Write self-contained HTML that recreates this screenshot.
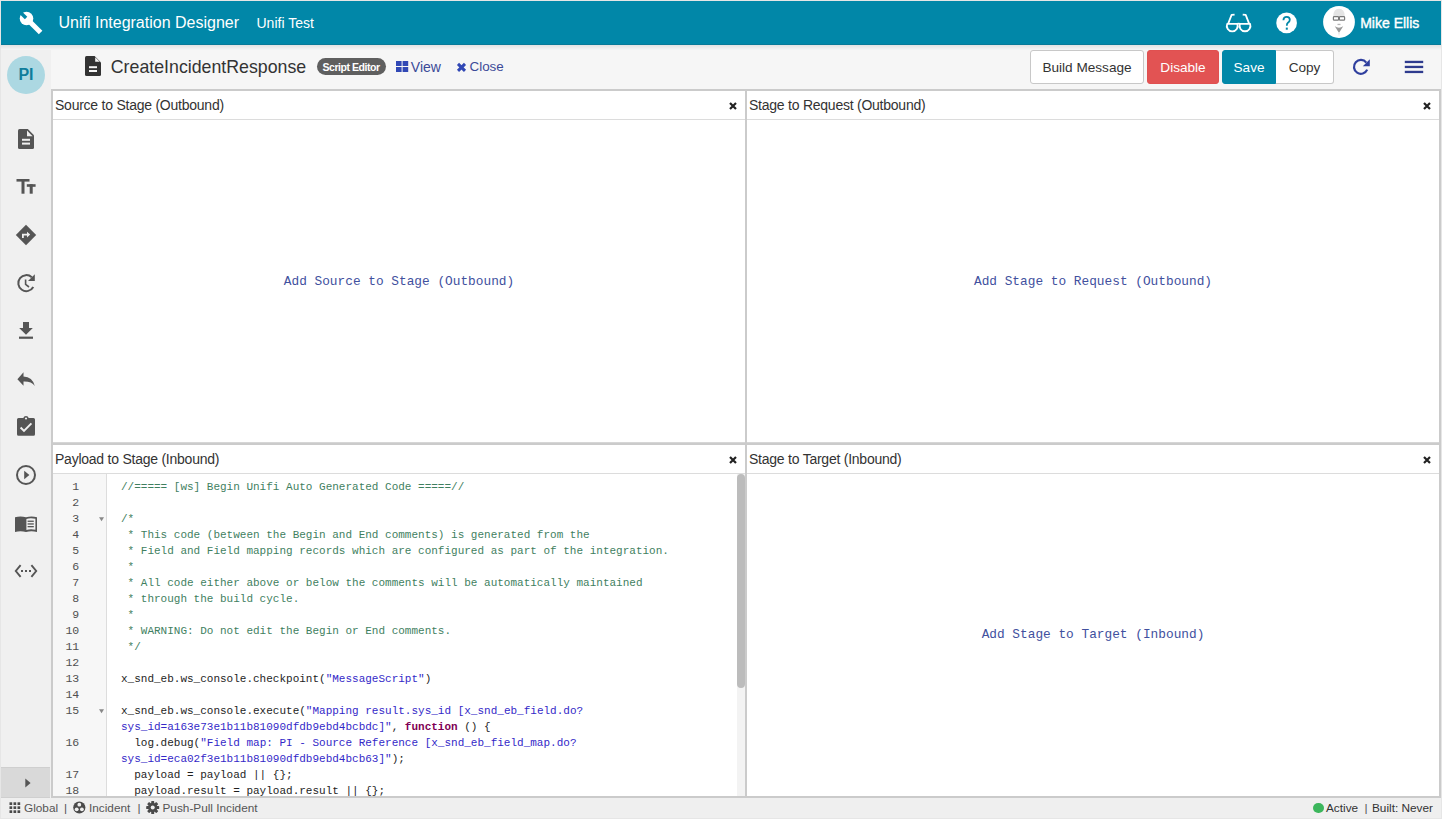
<!DOCTYPE html>
<html><head><meta charset="utf-8">
<style>
*{box-sizing:border-box;margin:0;padding:0}
html,body{width:1442px;height:819px;overflow:hidden;background:#e6e6e6;font-family:"Liberation Sans",sans-serif;color:#333}
.abs{position:absolute}
#hdr{position:absolute;left:1px;top:1px;width:1440px;height:44px;background:#0187a8}
#side{position:absolute;left:1px;top:45px;width:50px;height:753px;background:#f0f0f0}
#tb{position:absolute;left:51px;top:45px;width:1390px;height:44px;background:#f6f6f6}
#panels{position:absolute;left:51px;top:89px;width:1390px;height:709px;background:#cbcbcb}
.pnl{position:absolute;background:#fff;overflow:hidden}
.ph{position:absolute;left:0;top:0;right:0;height:29px;border-bottom:1px solid #dcdcdc}
.pt{position:absolute;left:2px;top:5.5px;font-size:14px;letter-spacing:-0.24px;line-height:16px;color:#333;white-space:nowrap}
.px{position:absolute;right:8px;top:11px;width:8px;height:8px}
.add{position:absolute;left:0;right:0;text-align:center;font-family:"Liberation Mono",monospace;font-size:12.8px;color:#41509e;white-space:nowrap}
#status{position:absolute;left:1px;top:798px;width:1440px;height:20px;background:#efefef;font-size:12px;color:#555}
.btn{position:absolute;top:50px;height:34px;border-radius:3px;font-size:13.6px;line-height:33px;text-align:center;white-space:nowrap}
.gut{position:absolute;left:0;top:29px;width:54px;bottom:0;background:#f7f7f7;border-right:1px solid #ddd}
.ln{position:absolute;right:28px;font-family:"Liberation Mono",monospace;font-size:11px;line-height:16px;color:#555;text-align:right}
.code{position:absolute;left:68px;top:33.5px;font-family:"Liberation Mono",monospace;font-size:11px;line-height:16px;color:#1e1e1e;white-space:pre}
.cm{color:#3F7F5F}.st{color:#3328c8}.kw{color:#7F0055;font-weight:bold}
</style></head><body>
<!-- HEADER -->
<div id="hdr"></div>
<svg class="abs" style="left:0;top:0" width="50" height="45" viewBox="0 0 50 45">
  <defs><mask id="wm"><rect width="50" height="45" fill="#fff"/><polygon points="27.28,16.87 24.87,19.28 18.23,12.63 20.63,10.23" fill="#000"/></mask></defs>
  <g mask="url(#wm)" fill="#fff"><circle cx="26.5" cy="18.5" r="6.8"/></g>
  <line x1="26.5" y1="18.5" x2="40.6" y2="32.6" stroke="#fff" stroke-width="5"/>
</svg>
<div class="abs" style="left:58.5px;top:12.5px;font-size:16px;line-height:20px;color:#fff;white-space:nowrap">Unifi Integration Designer</div>
<div class="abs" style="left:256.5px;top:13px;font-size:14px;line-height:20px;color:#fff;white-space:nowrap">Unifi Test</div>
<svg class="abs" style="left:1220px;top:8px" width="40" height="30" viewBox="0 0 40 30">
  <g fill="none" stroke="#fff" stroke-width="1.8" stroke-linejoin="round">
    <path d="M7.2 15.9 A5.45 5.45 0 1 0 17.3 15.9 Z"/>
    <path d="M19.9 15.9 A5.45 5.45 0 1 0 30.1 15.9 Z"/>
    <path d="M17.3 15.9 Q18.6 15.2 19.9 15.9"/>
    <path d="M8.2 15.6 L11.6 6.9 L14.6 6.6"/>
    <path d="M29.1 15.6 L25.7 6.9 L22.7 6.6"/>
  </g>
</svg>
<svg class="abs" style="left:1276px;top:12px" width="22" height="22" viewBox="0 0 22 22">
  <circle cx="10.6" cy="10.9" r="10.35" fill="#fff"/>
  <path d="M7.4 8.2 Q7.6 4.9 10.7 4.9 Q13.8 4.9 13.8 7.8 Q13.8 9.6 11.9 10.8 Q10.8 11.6 10.8 13.8" fill="none" stroke="#0187a8" stroke-width="1.8"/>
  <rect x="9.8" y="15.6" width="2" height="2.1" fill="#0187a8"/>
</svg>
<svg class="abs" style="left:1323px;top:6px" width="32" height="32" viewBox="0 0 32 32">
  <circle cx="16" cy="16" r="15.9" fill="#fff"/>
  <path d="M10.3 10 Q10.5 2.8 16 2.8 Q21.5 2.8 21.7 10 Z" fill="#e4e4e4"/>
  <rect x="10.4" y="10.6" width="5.2" height="3.6" rx="0.8" fill="none" stroke="#7a7a7a" stroke-width="1.2"/>
  <rect x="16.4" y="10.6" width="5.2" height="3.6" rx="0.8" fill="none" stroke="#7a7a7a" stroke-width="1.2"/>
  <rect x="14.5" y="17.8" width="3" height="1.3" fill="#b5b5b5"/>
  <path d="M11.8 20.3 Q16 23.2 20.2 20.3 L16.6 26 L15.4 26 Z" fill="#9a9a9a"/>
  <path d="M15.3 26 L16 30.5 L16.7 26 Z" fill="#dcdcdc"/>
</svg>
<div class="abs" style="left:1360.2px;top:13px;font-size:14px;-webkit-text-stroke:0.4px #fff;line-height:20px;color:#fff;white-space:nowrap">Mike Ellis</div>

<!-- SIDEBAR -->
<div id="side"></div>
<div class="abs" style="left:7px;top:56px;width:38px;height:38px;border-radius:50%;background:#acd8e2"></div>
<div class="abs" style="left:7px;top:65px;width:38px;text-align:center;font-size:16px;font-weight:bold;line-height:20px;color:#0f7d9c">PI</div>
<svg class="abs" style="left:0;top:120px" width="50" height="480" viewBox="0 120 50 480" fill="#555">
  <!-- doc 18..34 x 129..149 -->
  <path d="M19.5 129 H27.8 L34 135.2 V147.5 Q34 149 32.5 149 H19.5 Q18 149 18 147.5 V130.5 Q18 129 19.5 129 Z"/>
  <path d="M27 130.6 L32.6 136.2 H27 Z" fill="#f0f0f0"/>
  <rect x="22" y="138.8" width="8" height="2" fill="#f0f0f0"/><rect x="22" y="142.6" width="8" height="2" fill="#f0f0f0"/>
  <!-- Tt 16.4..35.6 x 179..193.7 -->
  <rect x="16.5" y="179" width="13" height="2.6"/><rect x="21.5" y="179" width="3" height="14.7"/>
  <rect x="26.8" y="184.2" width="8.8" height="2.6"/><rect x="29.7" y="184.2" width="3" height="9.5"/>
  <!-- diamond 16..36 x 225..245 -->
  <path d="M26 224.8 L36.2 235 L26 245.2 L15.8 235 Z"/>
  <path d="M22 238 V233.8 H27 V231.8 L30.2 234.6 L27 237.4 V235.6 H23.8 V238 Z" fill="#f0f0f0"/>
  <!-- history 17..35 x 274..292 -->
  <path d="M33.3 287 A8 8 0 1 1 31.8 277.3" fill="none" stroke="#555" stroke-width="2"/>
  <path d="M34.8 274.2 V281 H28 Z"/>
  <path d="M25.6 279.5 V284.3 L29 287" fill="none" stroke="#555" stroke-width="1.6"/>
  <!-- download 19..33 x 322..339 -->
  <rect x="23" y="322" width="6" height="6.4"/><path d="M19.2 328 H32.8 L26 334.8 Z"/><rect x="19" y="336.6" width="14" height="2.2"/>
  <!-- reply 17..35 x 372..386 -->
  <path d="M17.4 379.2 L23.5 372.3 V376.4 Q32.5 376.6 34.8 386 Q31.5 381.3 23.5 381.6 V385.8 Z"/>
  <!-- clipboard 17..35 x 416..436 -->
  <path d="M18.5 418 H23.3 A2.8 2.8 0 0 1 28.7 418 H33.5 Q35 418 35 419.5 V434.3 Q35 435.8 33.5 435.8 H18.5 Q17 435.8 17 434.3 V419.5 Q17 418 18.5 418 Z"/>
  <circle cx="26" cy="418.5" r="1.1" fill="#f0f0f0"/>
  <path d="M20.6 427.5 L24 430.9 L31.4 423.4" fill="none" stroke="#f0f0f0" stroke-width="2"/>
  <!-- play circle 16..36 x 465..485 -->
  <circle cx="26" cy="475" r="9" fill="none" stroke="#555" stroke-width="2"/>
  <path d="M24.2 470.8 L29.4 475 L24.2 479.2 Z"/>
  <!-- book 15..37 x 516..532 -->
  <path d="M15 517.3 Q20.5 515.5 26 517.3 Q31.5 515.5 37 517.3 V532 Q31.5 530.4 26 532 Q20.5 530.4 15 532 Z"/>
  <path d="M26.4 519 Q30.3 517.6 35.4 518.8 V529.8 Q30.6 528.8 26.4 530 Z" fill="#f0f0f0"/>
  <rect x="27.6" y="520.6" width="6.2" height="1.3"/><rect x="27.6" y="523.3" width="6.2" height="1.3"/><rect x="27.6" y="526" width="6.2" height="1.3"/>
  <!-- code arrows 15..37 x 565..577 -->
  <path d="M20.6 565.2 L15.8 571 L20.6 576.8 M31.4 565.2 L36.2 571 L31.4 576.8" fill="none" stroke="#555" stroke-width="1.9"/>
  <rect x="21" y="570" width="2" height="2"/><rect x="25" y="570" width="2" height="2"/><rect x="29" y="570" width="2" height="2"/>
</svg>
<div class="abs" style="left:1px;top:767px;width:49px;height:31px;background:#d9d9d9;border-top:1px solid #cfcfcf;border-bottom:1px solid #cfcfcf"></div>
<svg class="abs" style="left:24.5px;top:777.5px" width="6" height="10" viewBox="0 0 6 10"><path d="M0.3 0.5 L5.6 5 L0.3 9.5 Z" fill="#555"/></svg>

<!-- TOOLBAR -->
<div id="tb"></div>
<div class="abs" style="left:1px;top:45px;width:1440px;height:5px;background:linear-gradient(#e2e2e2,#f6f6f6)"></div>
<div class="abs" style="left:1px;top:44px;width:1440px;height:1px;background:#087a98"></div>
<svg class="abs" style="left:85px;top:56px" width="16" height="20" viewBox="0 0 16 20">
  <path d="M1.5 0 H9.6 L16 6.4 V18.5 Q16 20 14.5 20 H1.5 Q0 20 0 18.5 V1.5 Q0 0 1.5 0 Z" fill="#333"/>
  <path d="M10.2 1.2 L14.8 5.8 H10.2 Z" fill="#f6f6f6"/>
  <rect x="4" y="10.2" width="8" height="2" fill="#f6f6f6"/>
  <rect x="4" y="14" width="8" height="2" fill="#f6f6f6"/>
</svg>
<div class="abs" style="left:110.8px;top:54.8px;font-size:17.75px;line-height:24px;color:#333;white-space:nowrap">CreateIncidentResponse</div>
<div class="abs" style="left:317px;top:58px;width:69px;height:17px;border-radius:9px;background:#5f5f5f"></div>
<div class="abs" style="left:322.5px;top:59.8px;font-size:10.5px;font-weight:bold;letter-spacing:-0.45px;line-height:14px;color:#fff;white-space:nowrap">Script Editor</div>
<svg class="abs" style="left:395.5px;top:61px" width="13" height="11" viewBox="0 0 13 11">
  <rect x="0" y="0" width="5.6" height="5" fill="#3148b5"/><rect x="6.6" y="0" width="5.6" height="5" fill="#3148b5"/>
  <rect x="0" y="6" width="5.6" height="5" fill="#3148b5"/><rect x="6.6" y="6" width="5.6" height="5" fill="#3148b5"/>
</svg>
<div class="abs" style="left:410.8px;top:57px;font-size:14px;line-height:20px;color:#3b4a98;white-space:nowrap">View</div>
<svg class="abs" style="left:456px;top:62px" width="11" height="11" viewBox="0 0 11 11">
  <path d="M2 1.9 L9 8.9 M9 1.9 L2 8.9" stroke="#3148b5" stroke-width="3"/>
</svg>
<div class="abs" style="left:469.5px;top:57px;font-size:13.4px;line-height:20px;color:#3b4a98;white-space:nowrap">Close</div>
<div class="btn" style="left:1030px;width:114px;background:#fff;border:1px solid #c8c8c8;color:#333">Build Message</div>
<div class="btn" style="left:1147px;width:72px;background:#e25353;color:#fff;border:1px solid #e05050">Disable</div>
<div class="btn" style="left:1222px;width:54px;background:#0187a8;color:#fff;border-radius:3px 0 0 3px;border:1px solid #0187a8">Save</div>
<div class="btn" style="left:1276px;width:58px;background:#fff;color:#333;border:1px solid #c8c8c8;border-left:none;border-radius:0 3px 3px 0">Copy</div>
<svg class="abs" style="left:1352px;top:58px" width="19" height="18" viewBox="0 0 19 18">
  <path d="M15.2 11.6 A6.9 6.9 0 1 1 14.3 4.6" fill="none" stroke="#2f3f9e" stroke-width="2.2"/>
  <path d="M17.8 1.2 V8.2 H10.8 Z" fill="#2f3f9e"/>
</svg>
<svg class="abs" style="left:1404px;top:60px" width="20" height="14" viewBox="0 0 20 14">
  <rect x="0.8" y="0.8" width="18.4" height="2.3" fill="#2e3b8e"/>
  <rect x="0.8" y="5.8" width="18.4" height="2.3" fill="#2e3b8e"/>
  <rect x="0.8" y="10.8" width="18.4" height="2.3" fill="#2e3b8e"/>
</svg>

<!-- PANELS -->
<div id="panels">
  <div class="pnl" style="left:2px;top:2px;width:692px;height:352px;border-bottom:1px solid #d6d6d6">
    <div class="ph"><div class="pt">Source to Stage (Outbound)</div><svg class="px" viewBox="0 0 8 8"><path d="M1 1 L7 7 M7 1 L1 7" stroke="#222" stroke-width="2.2"/></svg></div>
    <div class="add" style="top:183px">Add Source to Stage (Outbound)</div>
  </div>
  <div class="pnl" style="left:696px;top:2px;width:692px;height:352px;border-bottom:1px solid #d6d6d6">
    <div class="ph"><div class="pt">Stage to Request (Outbound)</div><svg class="px" viewBox="0 0 8 8"><path d="M1 1 L7 7 M7 1 L1 7" stroke="#222" stroke-width="2.2"/></svg></div>
    <div class="add" style="top:183px">Add Stage to Request (Outbound)</div>
  </div>
  <div class="pnl" style="left:2px;top:356px;width:692px;height:351px">
    <div class="ph"><div class="pt">Payload to Stage (Inbound)</div><svg class="px" viewBox="0 0 8 8"><path d="M1 1 L7 7 M7 1 L1 7" stroke="#222" stroke-width="2.2"/></svg></div>
    <div class="gut"></div>
    <pre class="lnum" style="position:absolute;left:0;top:34px;width:25.8px;text-align:right;font-family:'Liberation Mono',monospace;font-size:11.5px;letter-spacing:-0.3px;line-height:16px;color:#505050">1
2
3
4
5
6
7
8
9
10
11
12
13
14
15

16

17
18</pre>
    <svg class="abs" style="left:46px;top:72px" width="6" height="5"><path d="M0 0.2 H5 L2.5 4.2 Z" fill="#888"/></svg>
    <svg class="abs" style="left:46px;top:264px" width="6" height="5"><path d="M0 0.2 H5 L2.5 4.2 Z" fill="#888"/></svg>
    <pre class="code"><span class="cm">//===== [ws] Begin Unifi Auto Generated Code =====//</span>

<span class="cm">/*</span>
<span class="cm"> * This code (between the Begin and End comments) is generated from the</span>
<span class="cm"> * Field and Field mapping records which are configured as part of the integration.</span>
<span class="cm"> *</span>
<span class="cm"> * All code either above or below the comments will be automatically maintained</span>
<span class="cm"> * through the build cycle.</span>
<span class="cm"> *</span>
<span class="cm"> * WARNING: Do not edit the Begin or End comments.</span>
<span class="cm"> */</span>

x_snd_eb.ws_console.checkpoint(<span class="st">"MessageScript"</span>)

x_snd_eb.ws_console.execute(<span class="st">"Mapping result.sys_id [x_snd_eb_field.do?</span>
<span class="st">sys_id=a163e73e1b11b81090dfdb9ebd4bcbdc]"</span>, <span class="kw">function</span> () {
  log.debug(<span class="st">"Field map: PI - Source Reference [x_snd_eb_field_map.do?</span>
<span class="st">sys_id=eca02f3e1b11b81090dfdb9ebd4bcb63]"</span>);
  payload = payload || {};
  payload.result = payload.result || {};</pre>
    <div class="abs" style="left:684px;top:29px;width:8px;height:322px;background:#f3f3f3"></div>
    <div class="abs" style="left:684px;top:29px;width:8px;height:214px;border-radius:4px;background:#bcbcbc"></div>
  </div>
  <div class="pnl" style="left:696px;top:356px;width:692px;height:351px">
    <div class="ph"><div class="pt">Stage to Target (Inbound)</div><svg class="px" viewBox="0 0 8 8"><path d="M1 1 L7 7 M7 1 L1 7" stroke="#222" stroke-width="2.2"/></svg></div>
    <div class="add" style="top:182px">Add Stage to Target (Inbound)</div>
  </div>
</div>
<!-- STATUS -->
<div id="status"></div>
<svg class="abs" style="left:9px;top:802px" width="12" height="12" viewBox="0 0 12 12" fill="#4a4a4a"><rect x="0.5" y="0.3" width="2.7" height="2.7"/><rect x="4.5" y="0.3" width="2.7" height="2.7"/><rect x="8.5" y="0.3" width="2.7" height="2.7"/><rect x="0.5" y="4.3" width="2.7" height="2.7"/><rect x="4.5" y="4.3" width="2.7" height="2.7"/><rect x="8.5" y="4.3" width="2.7" height="2.7"/><rect x="0.5" y="8.3" width="2.7" height="2.7"/><rect x="4.5" y="8.3" width="2.7" height="2.7"/><rect x="8.5" y="8.3" width="2.7" height="2.7"/></svg>
<div class="abs" style="left:24px;top:800px;font-size:11.8px;line-height:16px;color:#555;white-space:nowrap">Global</div>
<div class="abs" style="left:64px;top:800px;font-size:11.8px;line-height:16px;color:#555">|</div>
<svg class="abs" style="left:73px;top:801px" width="13" height="13" viewBox="0 0 13 13">
  <circle cx="6.3" cy="6.5" r="6.1" fill="#4a4a4a"/>
  <circle cx="6.3" cy="3.7" r="1.9" fill="#efefef"/><circle cx="3.7" cy="8.3" r="1.9" fill="#efefef"/><circle cx="8.9" cy="8.3" r="1.9" fill="#efefef"/>
</svg>
<div class="abs" style="left:89px;top:800px;font-size:11.8px;line-height:16px;color:#555;white-space:nowrap">Incident</div>
<div class="abs" style="left:137.5px;top:800px;font-size:11.8px;line-height:16px;color:#555">|</div>
<svg class="abs" style="left:146px;top:801px" width="14" height="14" viewBox="0 0 14 14">
  <g fill="#4a4a4a" transform="translate(6.7 6.6)">
    <circle r="4.6"/>
    <rect x="-1.5" y="-6.5" width="3" height="13" rx="0.6"/>
    <rect x="-1.5" y="-6.5" width="3" height="13" rx="0.6" transform="rotate(45)"/>
    <rect x="-1.5" y="-6.5" width="3" height="13" rx="0.6" transform="rotate(90)"/>
    <rect x="-1.5" y="-6.5" width="3" height="13" rx="0.6" transform="rotate(135)"/>
  </g>
  <circle cx="6.7" cy="6.6" r="2" fill="#efefef"/>
</svg>
<div class="abs" style="left:162.5px;top:800px;font-size:11.8px;line-height:16px;color:#555;white-space:nowrap">Push-Pull Incident</div>
<div class="abs" style="left:1313px;top:803px;width:10.5px;height:10px;border-radius:50%;background:#3cb65c"></div>
<div class="abs" style="left:1326px;top:800px;font-size:11.8px;line-height:16px;color:#333;white-space:nowrap">Active</div>
<div class="abs" style="left:1364.5px;top:800px;font-size:11.8px;line-height:16px;color:#555">|</div>
<div class="abs" style="left:1372px;top:800px;font-size:11.8px;line-height:16px;color:#333;white-space:nowrap">Built: Never</div>

</body></html>
